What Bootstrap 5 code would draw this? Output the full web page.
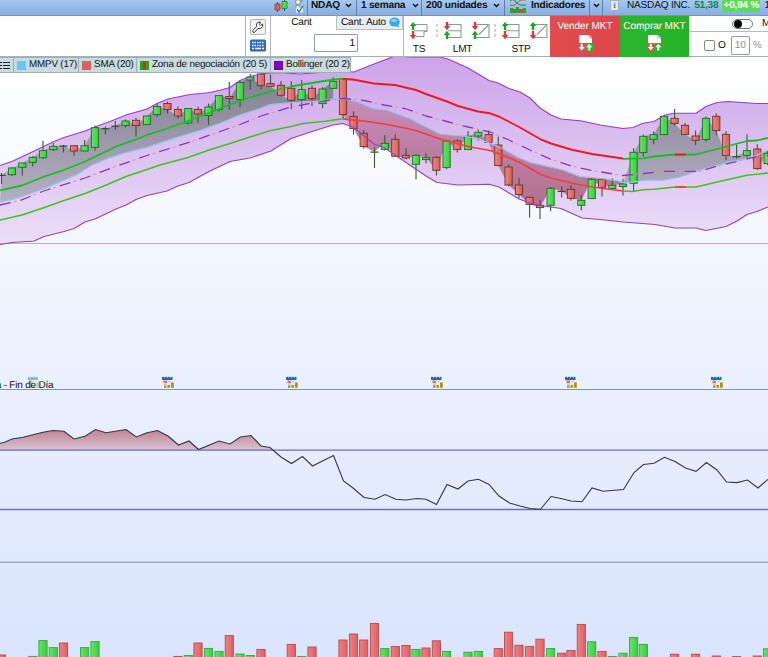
<!DOCTYPE html>
<html lang="es">
<head>
<meta charset="utf-8">
<meta name="viewport" content="width=device-width, initial-scale=1">
<title>NDAQ - NASDAQ INC.</title>
<link href="https://cdn.jsdelivr.net/npm/bootstrap@5.3.0/dist/css/bootstrap.min.css" rel="stylesheet">
<style>
body{width:768px;height:657px;overflow:hidden;font-family:"Liberation Sans",Arial,sans-serif;font-size:10.1px;letter-spacing:-.22px;text-rendering:geometricPrecision;line-height:12px;color:#111;background:#fff}
svg{display:block;flex:none}
.topbar{height:16px;background:linear-gradient(#a5c8f0,#87afe1);border-bottom:1px solid #8495aa}
.seg{height:16px;padding-bottom:5px;border-right:1px solid #5f7fa9;display:flex;align-items:center;flex:none;font-weight:700;white-space:nowrap}
.s-pre{width:308px;padding-left:274px;gap:5px}
.s-sym{width:49px;padding-left:3px;gap:5px}
.s-per{width:65px;padding-left:4px;gap:7px}
.s-uni{width:83px;padding-left:4px;gap:6px}
.s-ind{width:85px;padding-left:5px;gap:4px}
.s-arr{width:13px;padding-left:3px}
.s-quote{width:165px;padding-left:7px;border:0;font-weight:400}
.info{width:9px;height:11px;flex:none;background:#e3e8ee;border:1px solid #9db3cb;font:700 8px/9px "Liberation Serif",serif;color:#567;text-align:center}
.up{color:#088a2c;font-weight:700}
.pct{background:#5bdb55;color:#fff;font-weight:700;border-radius:0 0 2px 2px;height:12px;line-height:12px;width:38px;text-align:center;flex:none}
.tools{height:41px;background:#fff;border-bottom:1px solid #a5b0b8}
.tools>*{flex:none;height:41px}
.t-blank{width:246px;border-right:1px solid #aeb7bd}
.t-small{width:25px;border-right:1px solid #aeb7bd;padding-top:3px}
.keybtn{width:16px;height:16px;border:1px solid #b4b4b4;background:#f2f2f2;border-radius:2px}
.t-qty{width:133px;border-right:1px solid #aeb7bd}
.lab{width:65px;text-align:center;padding:1px 4px 0 0}
.auto{width:67px;height:14px;background:#e9edef;border:1px solid #b8c0c6;border-top:0;padding:0 2px 0 4px;white-space:nowrap;line-height:13px}
.qty{width:44px;height:18px;margin:4px 0 0 43px;border:1px solid #949ca5;border-radius:1px;text-align:right;padding-right:2px;line-height:18px}
.t-ord{width:146px;padding:5px 0 0 6px}
.ordbtn{text-align:center;flex:none}
.ordbtn svg{margin:0 auto}
.ordlab{margin-top:5px;line-height:12px}
.act{color:#fff;text-align:center;padding-top:5px;letter-spacing:-.1px}
.act svg{margin:2px auto 0}
.sell{width:70px;background:linear-gradient(90deg,#e14c50,#de4649)}
.buy{width:69px;background:linear-gradient(90deg,#2ab52e,#24b328)}
.t-end{width:79px}
.e-top{height:16px;border-bottom:1px solid #b4bcc3;padding-left:43px}
.knob{width:21px;height:10px;border:1px solid #777;border-radius:5px;background:#fff}
.knob i{display:block;width:8px;height:8px;border-radius:50%;background:#000;margin-left:1px}
.e-bot{height:25px;padding:2px 0 0 15px;gap:3px}
.box{width:11px;height:11px;border:1px solid #888;border-radius:2px;flex:none}
.ten{width:19px;height:19px;flex:none;border:1px solid #929ba7;border-radius:2px;color:#8d949b;text-align:center;line-height:18px}
.unit{color:#8d949b}
.pane{height:600px;position:relative}
.legend{position:absolute;left:0;top:0;height:16px;font-size:9.9px;letter-spacing:-.2px}
.legend>span{height:16px;background:#c9dbe1;border:1px solid #9db0b8;border-left-width:0;display:flex;align-items:center;gap:3px;padding:0 0 0 3px;white-space:nowrap;flex:none}
.legend .l0{width:14px;padding-left:0}.legend .l1{width:65px}.legend .l2{width:58px}.legend .l3{width:134px}.legend .l4{width:80px}
.sw{width:9px;height:9px;flex:none}
.w1{background:#66c5fb}.w2{background:#dd5f62}.w3{background:linear-gradient(90deg,#1fa91f 33%,#dd2d15 33% 67%,#1fa91f 67%)}.w4{background:#7900bd}
</style>
<script src="https://cdn.jsdelivr.net/npm/bootstrap@5.3.0/dist/js/bootstrap.bundle.min.js"></script>
</head>
<body>
<svg width="0" height="0" class="position-absolute">
<defs>
<symbol id="chev" viewBox="0 0 7 5"><path d="M1 1l2.5 2.5L6 1" fill="none" stroke="#111" stroke-width="1.4"/></symbol>
<symbol id="au" viewBox="0 0 6 8"><path d="M3 0L6 3.8H4.2V8H1.8V3.8H0z"/></symbol>
<symbol id="bracket" viewBox="0 0 18 18"><path d="M4 3.5h13v13H4M4 9.8h13" fill="none" stroke="#89989f" stroke-width="1.1"/></symbol>
<symbol id="diag" viewBox="0 0 18 18"><path d="M4 3.5h13v13H4M7 13.5l9-9" fill="none" stroke="#89989f" stroke-width="1.1"/></symbol>
<symbol id="gr" viewBox="0 0 18 18"><path d="M3 1L6.200 5H4.200v4H1.800V5H-.2z" fill="#16a51c"/><path d="M3 18.300L6.200 14H4.200v-4H1.800v4H-.2z" fill="#df353b"/></symbol>
<symbol id="rg" viewBox="0 0 18 18"><path d="M3 9.300L6.200 5H4.200V1H1.800v4H-.2z" fill="#df353b"/><path d="M3 9.800L6.200 14H4.200v4H1.800v-4H-.2z" fill="#16a51c"/></symbol>
<symbol id="cal" viewBox="0 0 12 12"><path d="M.5 3h10v6.500h-10z" fill="#e6eef6"/><path d="M0 .3h10.500V3.500H0z" fill="#1d709f"/><path d="M2 1h1M5 1h1M8 1h1" stroke="#8fc4e6"/><path d="M1.500 4H5v2.800H1.500z" fill="#e46c6f"/><path d="M6 5h3M2 8h3" stroke="#b9cee2"/><path d="M2 9h2.500v2.200H2zM5.500 8.500H8v2.700H5.500zM9 6h2.800v5.200H9z" fill="#ac9410"/></symbol>
<symbol id="mkt" viewBox="0 0 17 17"><path d="M2 0h10l3 3v6H2z" fill="#fff"/><path d="M12 0v3h3" fill="none" stroke="#aaa"/><path d="M1 8h7.500v8.500H1z" fill="#e14c50"/><path d="M8.500 8H16v8.500H8.500z" fill="#28b52c"/><path d="M4.700 15.500L1.700 12h2V8.800h2V12h2z" fill="#fff"/><path d="M12.300 8.800L9.300 12.300h2v3.200h2v-3.200h2z" fill="#fff"/></symbol>
</defs>
</svg>

<header class="topbar d-flex">
  <div class="seg s-pre">
    <svg width="15" height="14" viewBox="0 0 15 14"><path d="M3.500 3v10M10.500 0v12" stroke="#444"/><path d="M1 5h5v6H1z" fill="#e85a5e" stroke="#a93439" stroke-width=".8"/><path d="M8 2.500h5v7H8z" fill="#54da50" stroke="#268427" stroke-width=".8"/></svg>
    <svg width="11" height="15" viewBox="0 0 11 15"><path d="M3 0v4M8 0v4M3 9v4" stroke="#777"/><circle cx="4" cy="4" r="2.500" fill="#eee" stroke="#888"/><circle cx="4" cy="9" r="2" fill="#eee" stroke="#888"/><path d="M2 9.500h7v5H2z" fill="#e8f0fa"/><path d="M3 11.500l2 2.500 4-6" fill="none" stroke="#246fd2" stroke-width="1.300"/></svg>
  </div>
  <div class="seg s-sym">NDAQ<svg width="7" height="5"><use href="#chev"/></svg></div>
  <div class="seg s-per">1 semana<svg width="7" height="5"><use href="#chev"/></svg></div>
  <div class="seg s-uni">200 unidades<svg width="7" height="5"><use href="#chev"/></svg></div>
  <div class="seg s-ind"><svg width="17" height="14" viewBox="0 0 17 14"><path d="M0 2q3-3 6 1t10 3" fill="none" stroke="#249b2d" stroke-width="1.200"/><path d="M0 6q4 2 7-2t9-3" fill="none" stroke="#c45"/><path d="M0 9h3v5H0zM6 8h3v6H6zM13 9h3v5h-3z" fill="#1eac2e"/><path d="M3 10h3v4H3zM9 10h4v4H9z" fill="#d44535"/></svg>Indicadores</div>
  <div class="seg s-arr"><svg width="7" height="5"><use href="#chev"/></svg></div>
  <div class="seg s-quote"><span class="info">i</span><span class="ms-2">NASDAQ INC.</span><span class="up ms-1">51,38</span><span class="pct ms-1">+0,94 %</span><span class="ms-1">18:00</span></div>
</header>

<section class="tools d-flex">
  <div class="t-blank"></div>
  <div class="t-small d-flex flex-column align-items-center gap-1">
    <span class="keybtn"><svg width="14" height="14" viewBox="0 0 14 14"><path d="M2 12l1 .8L7 8.500q3.500.8 4.800-2.300L11.500 4 9.500 5.500 8.300 4.500 9.500 2.200q-3-.8-4 1.800-.3 1.200.2 2.500L1.800 10.500z" fill="#fff" stroke="#333"/></svg></span>
    <svg width="16" height="13" viewBox="0 0 16 13"><rect y=".5" width="16" height="12" rx="1.500" fill="#2b69c7"/><path d="M2 3.500h12M2 6.500h12" stroke="#fff" stroke-width="1.500" stroke-dasharray="1.500 1"/><path d="M2 9.500h2M5 9.500h6M12 9.500h2" stroke="#fff" stroke-width="1.500"/></svg>
  </div>
  <div class="t-qty">
    <div class="d-flex"><span class="lab">Cant</span><span class="auto d-flex align-items-center justify-content-between">Cant. Auto<svg width="11" height="11" viewBox="0 0 11 11"><ellipse cx="5.500" cy="5" rx="5.300" ry="4.500" fill="#36a9ec"/><path d="M6 8l4 3-1-4z" fill="#36a9ec"/><ellipse cx="5" cy="3.500" rx="3" ry="1.500" fill="#8ad4fa"/></svg></span></div>
    <div class="qty">1</div>
  </div>
  <div class="t-ord d-flex">
    <div class="ordbtn" style="width:18px"><svg width="18" height="19" viewBox="0 0 18 19"><path d="M5 3.500h12v7h-3v5H6M4 9.800h13" fill="none" stroke="#89989f"/><use href="#gr" width="18" height="18"/></svg><div class="ordlab" style="margin-top:4px">TS</div></div>
    <div class="ordbtn" style="width:58px;margin-left:6px"><div class="d-flex"><svg width="4" height="18"><path d="M1 3v13" stroke="#aaa" stroke-dasharray="3 2"/></svg><svg width="18" height="18" style="margin-left:2px"><use href="#bracket"/><use href="#rg"/></svg><svg width="18" height="18" style="margin-left:9px"><use href="#diag"/><use href="#rg"/></svg></div><div class="ordlab" style="margin-left:-1px">LMT</div></div>
    <div class="ordbtn" style="width:58px"><div class="d-flex"><svg width="4" height="18"><path d="M1 3v13" stroke="#aaa" stroke-dasharray="3 2"/></svg><svg width="18" height="18" style="margin-left:2px"><use href="#bracket"/><use href="#gr"/></svg><svg width="18" height="18" style="margin-left:9px"><use href="#diag"/><use href="#gr"/></svg></div><div class="ordlab">STP</div></div>
  </div>
  <div class="act sell">Vender MKT<svg width="17" height="17"><use href="#mkt"/></svg></div>
  <div class="act buy">Comprar MKT<svg width="17" height="17"><use href="#mkt"/></svg></div>
  <div class="t-end overflow-hidden">
    <div class="e-top d-flex align-items-center"><span class="knob flex-shrink-0"><i></i></span><span style="margin-left:9px">Market</span></div>
    <div class="e-bot d-flex align-items-center"><span class="box"></span><span>O</span><span class="ten" style="margin-left:2px">10</span><span class="unit">%</span></div>
  </div>
</section>

<main class="pane">
<svg id="chart" width="768" height="600" viewBox="0 57 768 600">
<defs>
<linearGradient id="bg" x2="0" y2="1"><stop stop-color="#fff"/><stop offset=".25" stop-color="#f5f8ff"/><stop offset=".55" stop-color="#e9f0fe"/><stop offset=".78" stop-color="#e1eafd"/><stop offset="1" stop-color="#dae4fc"/></linearGradient>
<linearGradient id="band" gradientUnits="userSpaceOnUse" x1="0" y1="57" x2="0" y2="244"><stop stop-color="#cda3e9"/><stop offset=".5" stop-color="#dcc2f0"/><stop offset="1" stop-color="#ecdff9"/></linearGradient>
<linearGradient id="gray" gradientUnits="userSpaceOnUse" x1="0" y1="75" x2="0" y2="205"><stop stop-color="#80808f"/><stop offset=".5" stop-color="#9d98ac"/><stop offset="1" stop-color="#b5b0c4"/></linearGradient>
<linearGradient id="redz" gradientUnits="userSpaceOnUse" x1="0" y1="100" x2="0" y2="205"><stop stop-color="#c58bb9"/><stop offset="1" stop-color="#b4708f"/></linearGradient>
<linearGradient id="rsi" x2="0" y2="1"><stop stop-color="#bd8390"/><stop offset="1" stop-color="#d9c2d2"/></linearGradient>
<linearGradient id="cg"><stop stop-color="#67e566"/><stop offset="1" stop-color="#3ccb43"/></linearGradient>
<linearGradient id="cr"><stop stop-color="#f0897f"/><stop offset="1" stop-color="#d75e58"/></linearGradient>
<linearGradient id="vr"><stop stop-color="#f08080"/><stop offset="1" stop-color="#df6063"/></linearGradient>
</defs>
<rect y="57" width="768" height="600" fill="url(#bg)"/>
<g id="bands"></g>
<path d="M0 243.500H768" stroke="#f79c9c" stroke-width="1.200"/>
<g id="zones"></g>
<g id="candles"></g>
<g id="lines" fill="none" stroke-linejoin="round"></g>
<path d="M0 389.500H768M0 562.300H768" stroke="#8793a8" stroke-width="1.100"/>
<path d="M0 443.300L4 442.500 12 439 23 437.300 43 432.300 53 430.500 64 431.300 74 439 85 436.300 95.500 429.500 106 432.700 126 429.500 136.500 437 147 432.700 157.500 430.500 168 436 178.500 445 189 441 198.500 449.500 219 441 230 444 240.500 437 251 435.500 261 446 270 447.500 273.500 450H0z" fill="url(#rsi)"/>
<path d="M0 450.200H768M0 509.500H768" stroke="#6f6bcb" stroke-width="1.300"/>
<path d="M0 443.300L4 442.500 12 439 23 437.300 43 432.300 53 430.500 64 431.300 74 439 85 436.300 95.500 429.500 106 432.700 126 429.500 136.500 437 147 432.700 157.500 430.500 168 436 178.500 445 189 441 198.500 449.500 219 441 230 444 240.500 437 251 435.500 261 446 270 447.500 281 457 291.500 463.500 302.500 456.500 312.500 466 333.500 455.500 343.500 481 353 488 364 497.500 375 499.300 385 494.500 396 499.300 406 500 417 498.500 426 499.300 436.500 504.500 447 484.500 458 489 468 481 478.500 479.300 489 484.500 499 496 509.500 503 520 506 530 508.500 540.500 509.300 551 496.500 561 498.500 571 501 582 501.700 592 488 603 491.300 623.500 489.500 634 472.500 643.500 464.500 654 463.300 664.500 457.300 675 461.500 685.500 468 696 471.300 706.500 462.500 717 470 726.500 482 737 482.600 747.500 480 758 488 768 479.300" fill="none" stroke="#363648" stroke-width="1.100"/>
<g id="vol"></g>
<use href="#cal" x="27.500" y="376.500" width="12" height="12" opacity=".45"/>
<use href="#cal" x="162" y="376.500" width="12" height="12"/><use href="#cal" x="286" y="376.500" width="12" height="12"/><use href="#cal" x="431" y="376.500" width="12" height="12"/><use href="#cal" x="565" y="376.500" width="12" height="12"/><use href="#cal" x="711" y="376.500" width="12" height="12"/>
<text x="-4.200" y="387.500" font-size="10" textLength="57.500" fill="#111">a - Fin de Día</text>
</svg>
<div class="legend d-flex">
<span class="l0"><svg width="10" height="9" viewBox="0 0 10 9"><path d="M0 1.500h2M3 1.500h7M0 4.500h2M3 4.500h7M0 7.500h2M3 7.500h7" stroke="#222" stroke-width="1.200"/></svg></span>
<span class="l1"><i class="sw w1"></i>MMPV (17)</span>
<span class="l2"><i class="sw w2"></i>SMA (20)</span>
<span class="l3"><i class="sw w3"></i>Zona de negociación (20 5)</span>
<span class="l4"><i class="sw w4"></i>Bollinger (20 2)</span>
</div>
</main>
<script>
const NS='http://www.w3.org/2000/svg';
function add(group,tag,attrs){const e=document.createElementNS(NS,tag);for(const k in attrs)e.setAttribute(k,attrs[k]);document.getElementById(group).appendChild(e);}
// x centre, high, low, body top, body bottom, direction (1 = up)
const C=[[1.5,173,184,175,176,1],[12,167,176,168,174.7,1],[22.3,163,175.5,163,167.3,1],[32.8,156,166.6,157.3,162.3,1],[43,140.7,159,150.6,157.8,1],[53.3,143,151,146.3,149.6,1],[63.5,145,152.5,145.7,146.4,1],[74,145.7,155.7,145.7,151,0],[84.6,140,151,145.7,151,1],[95,125.5,150.7,127.6,147.3,1],[105.4,126.6,134.5,128.3,129,1],[115.4,121,129.5,125.8,126.5,1],[125.6,119.5,127.5,121,125.6,1],[136,118,136.6,120.3,125.6,0],[147,116,124.6,116,124.6,1],[157,103.5,116.5,106.5,114.6,1],[167.5,101.6,113.5,103.5,109.6,0],[178,106.6,118.5,109.5,116,0],[188.3,108.5,124.6,108.5,123,1],[198,106.8,123,109.5,114,0],[208.5,103.5,124.6,107,115.6,1],[219,95.6,111.5,95.6,109.6,1],[229.3,82,110,96.5,98.5,0],[240,80.6,107,82.6,99.6,1],[250.3,74,89.5,77,80,1],[261,74,89.5,74,85.6,0],[270.5,74.6,86.3,83.6,86.3,0],[281,81,96.5,85.3,95.3,0],[291.3,81.3,109.3,88.3,100.3,0],[301.7,80.3,109,89.6,99.6,1],[312,85.6,106,88.3,98.6,0],[322.6,87,108.3,89,103.6,1],[333.3,77.3,89,81.3,88.3,1],[343,78,118,79,114.6,0],[353.5,111.3,134.6,116.6,128.6,0],[363.7,130,148.5,133.3,146.6,0],[374.5,146.6,168,151.7,152.4,1],[384.8,135,150.5,143.3,149.6,1],[395.3,134.6,156.3,139.3,156.3,0],[406,148,159.6,155.3,158,0],[416,154,179.3,155.3,164.3,1],[426,153.3,163.3,157.6,159.6,1],[436.4,156,175.6,157.3,170.3,0],[446.6,140,169.3,141,167.6,1],[457.3,139.3,152.6,141,149.6,0],[468,131,149.6,136.3,149.6,1],[478.3,130,140.6,132.3,136,1],[488.6,130.6,142.3,134.6,142.3,0],[498.3,136.6,166,145,165.6,0],[508.6,164.6,186.3,167,185,0],[519,178.3,198,185,194.6,0],[529.6,197,217.6,197.3,204.3,0],[540,200,219,205.3,207.6,0],[550.6,187,211.3,188.3,205.3,1],[561.6,186.6,197.6,191,191.7,1],[571,185.3,200.6,189.3,198.3,0],[581.3,195,210.6,200.3,205.3,1],[591.7,178,199,179.3,198.6,1],[602,178,196.6,179.3,187.3,0],[612.3,178.3,190,185.3,188.6,1],[623,179,195.6,184,186.6,1],[633.6,148.3,191,152.3,183.3,1],[643.3,134.6,156.6,136.3,152.6,1],[653.6,131.6,144.3,134.6,139.3,1],[664,115.5,134.6,116.3,134.6,1],[674.6,109,125.6,118.3,123.6,0],[685,123,134.6,125.3,134.6,0],[695.6,130.6,145.3,136,140.3,0],[706,116.6,141.6,118.3,139.6,1],[716.3,113.3,135.6,116.3,130.6,0],[726,131.3,160,134.3,155.6,0],[736.6,144.6,158.6,156.3,157,1],[747,134.3,157.3,150.6,155.3,1],[757.3,144.3,170,149,168.6,0],[767.6,150,165,153.3,163.6,1]];
const upper='0,165.5 13,161 30,153 53,142 64,137.5 85,131 96,126.500 110,121.500 126,115 147,109 157,103.500 168,99 190,94.500 208,92.700 219,90.500 230,87.500 240,80.500 250,76.500 262,73.500 280,72.500 300,74 333,71.500 354,72 374,64 395,56 412,57 440,57 448,59 468,68 489,80.500 498,83 509,88.500 520,92 530,98 540,108 551,115 561,119 582,121 600,125 623,128.500 633,127.500 643,123.300 654,121.500 665,115 674,113.300 696,113.300 706,106.500 717,102.500 728,101.500 757,103.500 768,103.500';
const lower='0,244.500 12,242.500 34,241 44,236.500 64,231.500 74,228.500 85,222 95,219 116,209 126,205 136,199.500 147,195.500 167,191 178,186 189,182.500 209,171.500 230,161.500 250,158 271,151 291,138.500 312,131.500 333,125 343,123.500 353,127 374,144 384,147.500 395,155 426,176 437,182.500 458,185 489,184.300 499,187 519,199 530,203 540,205.500 561,208.500 582,218 600,219.500 623,222 655,224.500 675,228 696,228 706,230.500 726,226.500 737,221 747,214.500 757,211.500 768,207';
const blue='0,202.3 20,197.3 43,189 63,180.6 78,174 92,165 110,157.6 127,152.3 147,147.3 173,138.6 200,130.6 220,123.3 240,115 260,108.5 270,104.6 283,103.3 302,102 317,101.3 333,99 343,99.1 347,99.3 357,101.6 365,105 373,108.6 387,110 410,118.6 430,129 440,134 450,135 463,136 478,138.6 490,143.3 502,148.3 517,157 530,162.3 543,165.3 563,170 580,176.6 597,178 617,180.6 623,182.6 633,182 647,180 663,180.3 680,177 690,173.6 700,170 717,165.3 733,161.3 750,158 768,150.3';
const mid='0,205 20,200.500 45,190.500 85,178 116,166.300 147,155.500 168,149 190,142 220,131.500 240,124.500 261,116 291,107 312,103 333,99.500 343,98.500 364,100.500 384,105 405,108.500 426,116 447,121.500 468,127 490,132 509,140 530,150 551,159.300 571,166 592,170.500 623,175.500 644,173.500 665,171.300 700,171.300 717,166 737,161.500 757,156.500 768,155.500';
const pts=s=>s.split(' ').map(p=>p.split(',').map(Number));
const str=a=>a.map(p=>p.join(',')).join(' ');
add('bands','polygon',{points:upper+' '+str(pts(lower).reverse()),fill:'url(#band)'});
// Area between the closing price and the moving average
function zone(a,b,fill){
  const close=C.slice(a,b+1).map(c=>[c[0],c[5]?c[3]:c[4]]);
  const x0=close[0][0],x1=close[close.length-1][0];
  const base=pts(blue).filter(p=>p[0]>=x0-2&&p[0]<=x1+2).reverse();
  add('zones','polygon',{points:str(close.concat(base)),fill});
}
zone(0,32,'url(#gray)');zone(33,60,'url(#redz)');zone(60,74,'url(#gray)');
for(const [x,h,l,t,b,u] of C){
  add('candles','path',{d:`M${x} ${h}V${l}`,stroke:'#355b2a','stroke-width':1.1});
  if(b-t<1.2)add('candles','path',{d:`M${x-4} ${t+.4}h8`,stroke:'#23561f','stroke-width':1.2});
  else add('candles','rect',{x:x-3.6,y:t,width:7.2,height:b-t,fill:u?'url(#cg)':'url(#cr)',stroke:u?'#1b701d':'#6b3328','stroke-width':.9});
}
const line=(points,stroke,width,dash)=>add('lines','polyline',Object.assign({points,stroke,'stroke-width':width},dash?{'stroke-dasharray':dash}:{}));
line(upper,'#9140c4',1.1);line(lower,'#9140c4',1.1);line(blue,'#91c5ed',1.2);
line(mid,'#e58f98',1,'0 14 3 4');
line(mid,'#8c35c4',1.3,'11 10');
line('0,190.300 22,185.500 43,177 64,170 85,161.500 105,152 116,146.500 136,139.500 147,135 167,128.500 188,121 209,113 230,104.500 250,97.500 271,91.500 291,86.500 312,83 333,79.500 343,79','#15c01f',1.8);
line('0,220 22,215 43,208 64,200.500 85,193.500 105,185.500 126,176.500 147,169.500 160,165 188,157.500 209,150 230,143.500 250,137 271,130.500 291,126.500 303,123.500 323,121.500 343,118.800','#3fc41d',1.6);
line('343,79 353,79.500 374,83.500 395,85 416,90 426,94 447,101.500 458,106 478,111.500 490,113.300 500,117 520,127.500 541,139.500 551,143.500 571,149.500 592,154 623,158.500','#f01822',1.9);
line('343,118.800 364,121 384,124 405,128 416,130.500 437,138 447,141 468,146.500 490,150.500 500,154 520,162.500 541,174.500 551,178 571,183 592,187 623,191','#f63b3d',1.7);
line('623,158.800 643,158.300 654,156.500 675,154.500 696,154.500 717,149 747,141 757,140.500 768,137.800','#15c01f',1.8);
line('623,191 633,191.500 643,189.800 654,189.300 675,187 696,187 717,182 747,175.300 768,173','#3fc41d',1.6);
line('675,154.600 686,154.600','#f01822',1.9);line('675,187 686,187','#f63b3d',1.7);
// Volume: candle index, bar top, direction
const V=[[0,655,0],[3,656.4,1],[4,640.6,1],[5,647.6,1],[6,643,0],[8,647.6,1],[9,641.6,1],[17,656.4,0],[18,655.5,1],[19,643,0],[20,648.4,1],[21,651.4,1],[22,635.6,0],[23,654,1],[24,655.5,1],[25,649.4,0],[28,644.4,0],[29,656.4,1],[30,647,0],[33,640,0],[34,634,0],[35,640,0],[36,623.4,0],[37,648.6,1],[38,646.4,0],[39,645.4,0],[40,649.4,1],[41,648,0],[42,640.8,0],[43,651.4,1],[45,652.2,1],[46,651.4,1],[48,648.6,0],[49,632.2,0],[50,645.2,0],[51,646.4,0],[52,639.2,0],[53,648.6,1],[54,653.2,0],[55,650.4,0],[56,624.4,0],[57,641.8,1],[58,651.4,0],[59,656.4,1],[60,653.2,1],[61,637.4,1],[62,644.4,1],[65,654.2,0],[67,654.2,0],[69,656,0],[71,656.6,0],[73,656,0],[74,648.8,1]];
for(const [i,t,u] of V)add('vol','rect',{x:C[i][0]-4.1,y:t,width:8.2,height:662-t,fill:u?'url(#cg)':'url(#vr)',stroke:u?'#39a344':'#b14c55','stroke-width':.9});
</script>
</body>
</html>
